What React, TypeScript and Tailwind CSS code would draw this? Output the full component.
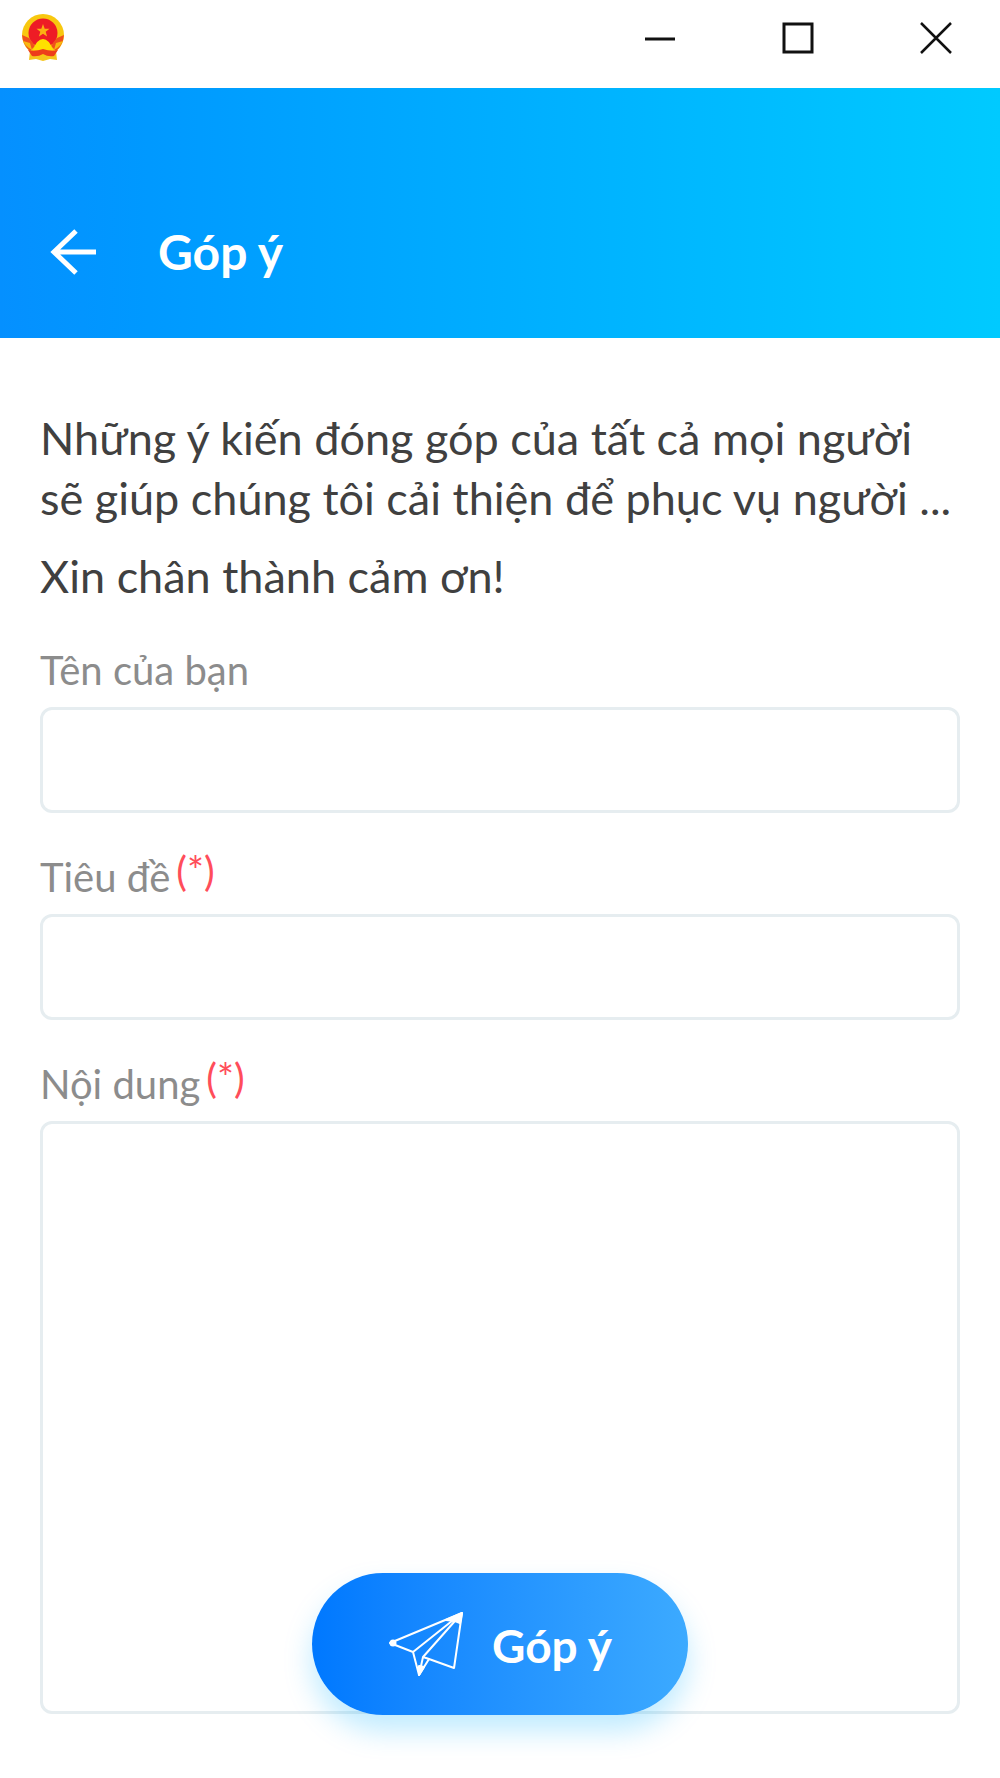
import React from 'react';

const Emblem = () => (
  <svg width="46" height="50" viewBox="0 0 46 50" aria-hidden="true">
    <path d="M10 38 L9 47 L16 46 L23 48 L30 46 L37 47 L36 38 Z" fill="#f5c51c" />
    <circle cx="23" cy="22" r="21" fill="#f8c80f" />
    <circle cx="23" cy="20" r="14.500" fill="#ee1c25" />
    <path d="M2 22 L9 25 L15 33 L10 38 Q3 32 2 22 Z M44 22 L37 25 L31 33 L36 38 Q43 32 44 22 Z" fill="#f0501c" />
    <path d="M3 28 L10 30 L12 37 Q6 34 3 28 Z M43 28 L36 30 L34 37 Q40 34 43 28 Z" fill="#f8b80f" />
    <path d="M23 11 L24.700 15.700 L29.500 15.800 L25.700 18.800 L27.100 23.500 L23 20.700 L18.900 23.500 L20.300 18.800 L16.500 15.800 L21.300 15.700 Z" fill="#fbb012" />
    <path d="M13 37 Q17 26 23 26 Q29 26 33 37 Z" fill="#ffe000" />
    <path d="M8 37 Q15 39 23 36 Q31 39 38 37 L34 43 Q28 44 23 41 Q18 44 12 43 Z" fill="#ed3d1b" />
  </svg>
);

const BackIcon = () => (
  <svg width="47" height="46" viewBox="0 0 47 46" fill="none" stroke="currentColor" strokeWidth="5" aria-hidden="true">
    <path d="M46 23 H4 M26 2 L4 23 L26 44" />
  </svg>
);

const PlaneIcon = () => (
  <svg width="76" height="66" viewBox="0 0 76 66" fill="none" stroke="currentColor" strokeWidth="2" strokeLinejoin="round" aria-hidden="true">
    <path d="M74 2 L2 32 L25 41 L31 64 L41 48 L66 57 Z" />
    <path d="M74 2 L25 41 M74 2 L35 46 L31 64 M35 46 L41 48" />
    <path d="M74 2 L58 9 L67 10 L72 12 Z M31 64 L31 55 L36 56 Z" fill="currentColor" />
    <circle cx="5" cy="32" r="2.500" fill="currentColor" />
  </svg>
);

const TitleBar = () => (
  <div className="flex h-[88px] items-center justify-between pb-3 pl-5">
    <Emblem />
    <div className="flex gap-[10px]">
      <button type="button" aria-label="Thu nhỏ" className="flex h-[72px] w-[128px] items-center justify-center">
        <svg width="32" height="32" viewBox="0 0 32 32" stroke="#111" strokeWidth="3" aria-hidden="true">
          <path d="M1 17 H31" />
        </svg>
      </button>
      <button type="button" aria-label="Phóng to" className="flex h-[72px] w-[128px] items-center justify-center">
        <svg width="32" height="32" viewBox="0 0 32 32" fill="none" stroke="#111" strokeWidth="3" aria-hidden="true">
          <rect x="2" y="2" width="28" height="28" />
        </svg>
      </button>
      <button type="button" aria-label="Đóng" className="flex h-[72px] w-[128px] items-center justify-center">
        <svg width="32" height="32" viewBox="0 0 32 32" stroke="#111" strokeWidth="2.500" aria-hidden="true">
          <path d="M1 1 L31 31 M31 1 L1 31" />
        </svg>
      </button>
    </div>
  </div>
);

const Header = () => (
  <header className="flex h-[250px] items-end gap-[61px] bg-linear-to-r from-[#0590ff] to-[#00caff] px-[50px] pb-[56px] text-white">
    <button type="button" aria-label="Quay lại" className="flex h-[60px] items-center">
      <BackIcon />
    </button>
    <h1 className="text-5xl/[60px] font-bold">Góp ý</h1>
  </header>
);

type FieldLabelProps = {
  htmlFor: string;
  required?: boolean;
  children: React.ReactNode;
};

const FieldLabel = ({ htmlFor, required, children }: FieldLabelProps) => (
  <label htmlFor={htmlFor} className="mb-[13px] flex items-start gap-[6px] text-[40px]/[48px] text-[#8c8c8c]">
    {children}
    {required && <span className="leading-[36px] text-[#ff4d5a]">(*)</span>}
  </label>
);

const App = () => {
  return (
    <div className="flex min-h-screen flex-col bg-white font-['Lato',sans-serif]">
      <TitleBar />
      <Header />
      <main className="relative flex grow flex-col px-10 pt-[70px] pb-16">
        <p className="text-[45px]/[60px] text-[#404040]">
          Những ý kiến đóng góp của tất cả mọi người sẽ giúp chúng tôi cải thiện để phục vụ người ...
        </p>
        <p className="mt-[18px] text-[45px]/[60px] text-[#404040]">Xin chân thành cảm ơn!</p>

        <form className="mt-10 flex grow flex-col gap-10">
          <div>
            <FieldLabel htmlFor="name">Tên của bạn</FieldLabel>
            <input
              id="name"
              type="text"
              className="block h-[106px] w-full rounded-xl border-[3px] border-[#e6edf0] px-6 text-[40px] outline-none"
            />
          </div>
          <div>
            <FieldLabel htmlFor="title" required>Tiêu đề</FieldLabel>
            <input
              id="title"
              type="text"
              required
              className="block h-[106px] w-full rounded-xl border-[3px] border-[#e6edf0] px-6 text-[40px] outline-none"
            />
          </div>
          <div className="flex grow flex-col">
            <FieldLabel htmlFor="content" required>Nội dung</FieldLabel>
            <textarea
              id="content"
              required
              className="block min-h-[400px] w-full grow resize-none rounded-xl border-[3px] border-[#e6edf0] px-6 py-4 text-[40px] outline-none"
            />
          </div>
          <button
            type="submit"
            className="absolute bottom-[63px] left-1/2 flex h-[142px] -translate-x-1/2 items-center gap-7 rounded-full bg-linear-to-r from-[#0078ff] to-[#3caaff] px-[76px] text-[46px]/[60px] font-bold whitespace-nowrap text-white shadow-[0_16px_28px_rgba(0,175,255,0.25)]"
          >
            <PlaneIcon />
            <span className="pt-1">Góp ý</span>
          </button>
        </form>
      </main>
    </div>
  );
};

export default App;
